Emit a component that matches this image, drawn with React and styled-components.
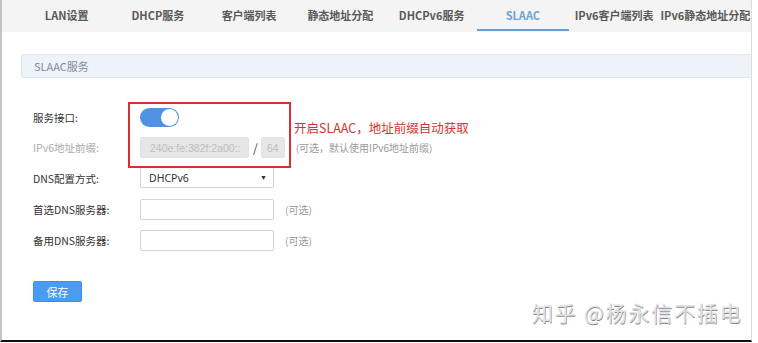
import React, { useState } from "react";
import styled, { createGlobalStyle, css } from "styled-components";

const GlobalStyle = createGlobalStyle`
  html, body {
    margin: 0;
    padding: 0;
    background: #fff;
  }
  body {
    font-family: "Noto Sans CJK SC", "Noto Sans", sans-serif;
    width: 758px;
    height: 343px;
    overflow: hidden;
  }
`;

const Frame = styled.div`
  position: relative;
  width: 752px;
  height: 342px;
  border-left: 2px solid #c4c4c4;
  border-right: 1px solid #dcdcdc;
  border-bottom: 2px solid #111;
  box-sizing: border-box;
  background: #fff;
`;

const TabBar = styled.div`
  display: flex;
  height: 32px;
  padding-left: 19px;
  background: #f4f4f4;
`;

const Tab = styled.div`
  width: 92px;
  height: 31px;
  display: flex;
  align-items: center;
  justify-content: center;
  font-size: 11px;
  font-weight: 700;
  color: #595959;
  white-space: nowrap;
  box-sizing: border-box;
  border-bottom: 2px solid transparent;

  ${({ $active }) =>
    $active &&
    css`
      color: #6ea3d6;
      border-bottom-color: #6aa0d4;
    `}
`;

const Body = styled.div`
  position: relative;
  padding: 22px 0 0 19px;
`;

const SectionHeader = styled.div`
  height: 24px;
  display: flex;
  align-items: center;
  padding-left: 12px;
  background: #eef3f9;
  border: 1px solid #dfe7ef;
  border-right: none;
  border-radius: 2px 0 0 2px;
  font-size: 11px;
  color: #7f8c99;
  box-sizing: border-box;
`;

const Form = styled.div`
  display: grid;
  grid-template-columns: 107px auto;
  grid-template-rows: 19px 21px 21px 21px 21px;
  row-gap: 10px;
  margin-top: 30px;
  padding-left: 12px;
  align-items: center;
`;

const Label = styled.div`
  font-size: 10.5px;
  color: ${({ $muted }) => ($muted ? "#aaa" : "#333")};
  white-space: nowrap;
`;

const Field = styled.div`
  display: flex;
  align-items: center;
`;

const Toggle = styled.div`
  width: 39px;
  height: 19px;
  border-radius: 10px;
  background: #4f92e3;
  position: relative;
  box-sizing: border-box;
  cursor: pointer;

  &::after {
    content: "";
    position: absolute;
    top: 1px;
    left: ${({ $on }) => ($on ? "21px" : "1px")};
    width: 17px;
    height: 17px;
    border-radius: 50%;
    background: #fff;
  }
`;

const Input = styled.div`
  width: ${({ $w }) => $w}px;
  height: 21px;
  box-sizing: border-box;
  border: 1px solid ${({ $disabled }) => ($disabled ? "#e2e2e2" : "#d3d3d3")};
  border-radius: 2px;
  background: ${({ $disabled }) => ($disabled ? "#e6e6e6" : "#fff")};
  color: #bdbdbd;
  font-size: 10.5px;
  display: flex;
  align-items: center;
  justify-content: ${({ $center }) => ($center ? "center" : "flex-start")};
  padding: 0 9px;
  font-family: "Liberation Sans", Arial, sans-serif;
  white-space: nowrap;
  overflow: hidden;
`;

const Slash = styled.span`
  font-size: 12px;
  color: #444;
  margin: 0 3px 0 4px;
`;

const Hint = styled.span`
  font-size: 10px;
  color: #999;
  margin-left: ${({ $ml }) => $ml}px;
  white-space: nowrap;
`;

const Select = styled.div`
  width: 134px;
  height: 21px;
  margin-top: -2px;
  box-sizing: border-box;
  border: 1px solid #d3d3d3;
  border-radius: 2px;
  display: flex;
  align-items: center;
  justify-content: space-between;
  padding: 0 6px 0 8px;
  font-size: 10.5px;
  color: #333;
  font-family: "Noto Sans", sans-serif;
`;

const Arrow = styled.span`
  font-size: 7px;
  color: #333;
`;

const SaveButton = styled.button`
  margin: 30px 0 0 12px;
  width: 49px;
  height: 21px;
  border: 1px solid #3f8ee6;
  border-radius: 2px;
  background: #4b9bf1;
  color: #fff;
  font-size: 11px;
  font-family: "Noto Sans CJK SC", sans-serif;
  padding: 0;
  display: block;
`;

const Annotation = styled.div`
  position: absolute;
  left: 126px;
  top: 70px;
  width: 163px;
  height: 66px;
  border: 2px solid #dc2f2b;
  box-sizing: border-box;
  pointer-events: none;
`;

const AnnotationText = styled.div`
  position: absolute;
  left: 292px;
  top: 86px;
  font-size: 12.5px;
  color: #d9322d;
  white-space: nowrap;
`;

const Watermark = styled.div`
  position: absolute;
  left: 530px;
  top: 297px;
  font-size: 21px;
  letter-spacing: 1.8px;
  color: #e2e2e2;
  text-shadow: 0.5px 0.5px 0.6px #8a8a8a;
  white-space: nowrap;
`;

const tabs = [
  "LAN设置",
  "DHCP服务",
  "客户端列表",
  "静态地址分配",
  "DHCPv6服务",
  "SLAAC",
  "IPv6客户端列表",
  "IPv6静态地址分配",
];

const App = () => {
  const [on, setOn] = useState(true);

  return (
    <>
      <GlobalStyle />
      <Frame>
        <TabBar>
          {tabs.map((t) => (
            <Tab key={t} $active={t === "SLAAC"}>
              {t}
            </Tab>
          ))}
        </TabBar>

        <Body>
          <SectionHeader>SLAAC服务</SectionHeader>

          <Form>
            <Label>服务接口:</Label>
            <Field>
              <Toggle $on={on} onClick={() => setOn(!on)} />
            </Field>

            <Label $muted>IPv6地址前缀:</Label>
            <Field>
              <Input $w={109} $disabled>
                240e:fe:382f:2a00::
              </Input>
              <Slash>/</Slash>
              <Input $w={24} $disabled $center>
                64
              </Input>
              <Hint $ml={11}>(可选，默认使用IPv6地址前缀)</Hint>
            </Field>

            <Label>DNS配置方式:</Label>
            <Field>
              <Select>
                DHCPv6
                <Arrow>▼</Arrow>
              </Select>
            </Field>

            <Label>首选DNS服务器:</Label>
            <Field>
              <Input $w={134} />
              <Hint $ml={11}>(可选)</Hint>
            </Field>

            <Label>备用DNS服务器:</Label>
            <Field>
              <Input $w={134} />
              <Hint $ml={11}>(可选)</Hint>
            </Field>
          </Form>

          <SaveButton>保存</SaveButton>

          <Annotation />
          <AnnotationText>开启SLAAC，地址前缀自动获取</AnnotationText>
        </Body>

        <Watermark>知乎 @杨永信不插电</Watermark>
      </Frame>
    </>
  );
};

export default App;
